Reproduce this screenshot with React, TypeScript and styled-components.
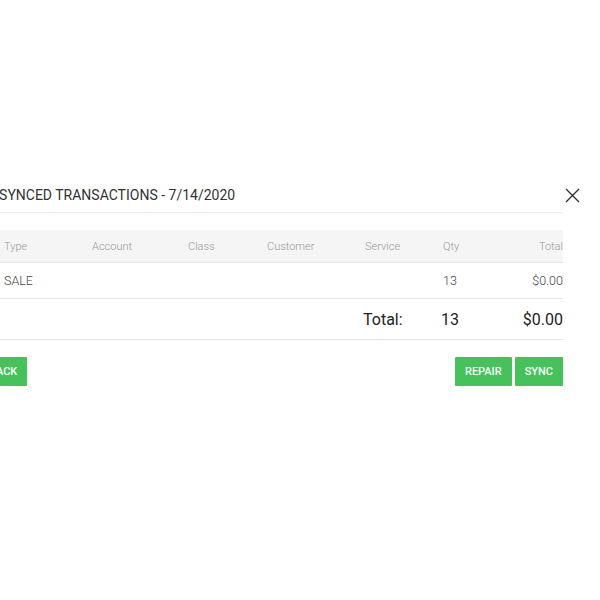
import styled, {createGlobalStyle} from 'styled-components'

const GlobalStyle = createGlobalStyle`
    body {
        margin: 0;
        background: #ffffff;
        font-family: Roboto, "Liberation Sans", sans-serif;
        overflow: hidden;
    }
`

interface Row {
    type: string
    account: string
    klass: string
    customer: string
    service: string
    qty: number
    total: string
}

const rows: Row[] = [
    {type: 'SALE', account: '', klass: '', customer: '', service: '', qty: 13, total: '$0.00'},
]

const columns = ['Type', 'Account', 'Class', 'Customer', 'Service', 'Qty', 'Total']

// modal listing unsynced transactions for a day
const App = () => {
    return (
        <Page>
            <GlobalStyle />
            <Modal>
                <CloseButton aria-label="close">
                    <svg width="15" height="15" viewBox="0 0 15 15">
                        <path d="M1 1 L14 14 M14 1 L1 14" stroke="#333" strokeWidth="1.4" fill="none" />
                    </svg>
                </CloseButton>
                <Header>
                    <Title>UNSYNCED TRANSACTIONS - 7/14/2020</Title>
                </Header>
                <Table>
                    <HeadRow>
                        {columns.map((c, i) => (
                            <HeadCell key={c} $right={i === columns.length - 1}>
                                {c}
                            </HeadCell>
                        ))}
                    </HeadRow>
                    {rows.map((r, i) => (
                        <BodyRow key={i}>
                            <Cell>{r.type}</Cell>
                            <Cell>{r.account}</Cell>
                            <Cell>{r.klass}</Cell>
                            <Cell>{r.customer}</Cell>
                            <Cell>{r.service}</Cell>
                            <Cell>{r.qty}</Cell>
                            <Cell $right>{r.total}</Cell>
                        </BodyRow>
                    ))}
                    <TotalRow>
                        <TotalCell />
                        <TotalCell />
                        <TotalCell />
                        <TotalCell />
                        <TotalCell>Total:</TotalCell>
                        <TotalCell>13</TotalCell>
                        <TotalCell $right>$0.00</TotalCell>
                    </TotalRow>
                </Table>
                <Footer>
                    <GreenButton>BACK</GreenButton>
                    <ButtonGroup>
                        <GreenButton>REPAIR</GreenButton>
                        <GreenButton>SYNC</GreenButton>
                    </ButtonGroup>
                </Footer>
            </Modal>
        </Page>
    )
}

export default App

const Page = styled.div`
    width: 600px;
    height: 600px;
    padding-top: 178px;
    box-sizing: border-box;
`

const Modal = styled.div`
    position: relative;
    margin-left: -44px;
    width: 607px;
    display: flex;
    flex-direction: column;
`

const CloseButton = styled.button`
    position: absolute;
    top: 10px;
    right: -17px;
    width: 15px;
    height: 15px;
    padding: 0;
    border: none;
    background: none;
    display: flex;
    cursor: pointer;
`

const Header = styled.div`
    height: 34px;
    padding-left: 24px;
    display: flex;
    align-items: center;
    border-bottom: 1px solid #ececec;
`

const Title = styled.span`
    font-size: 14px;
    color: #333;
`

const Table = styled.div`
    margin-top: 17px;
    margin-left: 36px;
    display: flex;
    flex-direction: column;
`

const gridCols = `88px 96px 79px 98px 78px 60px 72px`

const HeadRow = styled.div`
    display: grid;
    grid-template-columns: ${gridCols};
    height: 32px;
    align-items: center;
    background: #f5f5f5;
    border-bottom: 1px solid #e3e3e3;
`

const HeadCell = styled.div<{$right?: boolean}>`
    padding-left: 12px;
    font-size: 11px;
    font-weight: 300;
    color: #999;
    text-align: ${p => (p.$right ? 'right' : 'left')};
`

const BodyRow = styled.div`
    display: grid;
    grid-template-columns: ${gridCols};
    height: 35px;
    align-items: center;
    border-bottom: 1px solid #e3e3e3;
`

const Cell = styled.div<{$right?: boolean}>`
    padding-left: 12px;
    font-size: 12.5px;
    font-weight: 300;
    color: #444;
    text-align: ${p => (p.$right ? 'right' : 'left')};
`

const TotalRow = styled.div`
    display: grid;
    grid-template-columns: ${gridCols};
    height: 40px;
    align-items: center;
    border-bottom: 1px solid #e3e3e3;
`

const TotalCell = styled.div<{$right?: boolean}>`
    padding-left: 10px;
    font-size: 16px;
    color: #222;
    text-align: ${p => (p.$right ? 'right' : 'left')};
`

const Footer = styled.div`
    margin-top: 17px;
    margin-left: 23px;
    display: flex;
    justify-content: space-between;
`

const ButtonGroup = styled.div`
    display: flex;
    gap: 3px;
`

const GreenButton = styled.button`
    height: 29px;
    padding: 0 10px;
    border: none;
    border-radius: 1px;
    background: #45c25a;
    color: #fff;
    font-family: Roboto, "Liberation Sans", sans-serif;
    font-size: 11px;
    font-weight: 500;
    cursor: pointer;
`
